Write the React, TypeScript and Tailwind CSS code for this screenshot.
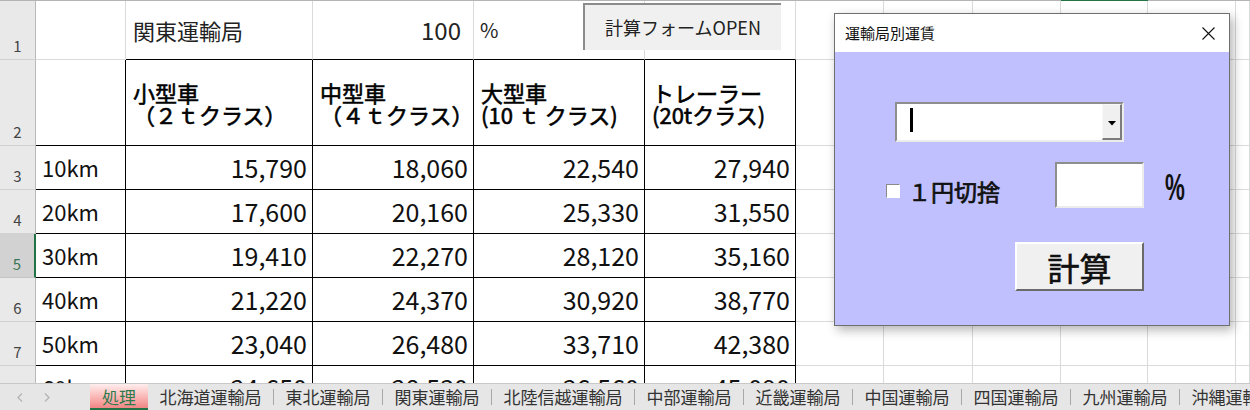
import React from 'react'

const FONT = "font-['Noto_Sans_CJK_JP','Noto_Sans',sans-serif]"
const COLS = 'grid grid-cols-[36px_90px_187px_161px_171px_151px_88px_89px_88px_87px_88px_1fr]'

const GRIDLINE = 'border-r border-b border-[#dadada]'
const BLACK = 'border-r border-b border-black'
const UNDER_BLACK = 'border-r border-b border-r-[#dadada] border-b-black'

const fares = [
  ['10km', '15,790', '18,060', '22,540', '27,940'],
  ['20km', '17,600', '20,160', '25,330', '31,550'],
  ['30km', '19,410', '22,270', '28,120', '35,160'],
  ['40km', '21,220', '24,370', '30,920', '38,770'],
  ['50km', '23,040', '26,480', '33,710', '42,380'],
  ['60km', '24,650', '28,530', '36,560', '45,090'],
]

const headers = [
  ['小型車', '（２ｔクラス）'],
  ['中型車', '（４ｔクラス）'],
  ['大型車', '(10 ｔ クラス)'],
  ['トレーラー', '(20tクラス)'],
]

const tabs = ['北海道運輸局', '東北運輸局', '関東運輸局', '北陸信越運輸局', '中部運輸局', '近畿運輸局', '中国運輸局', '四国運輸局', '九州運輸局', '沖縄運輸局']

function RowHead({ n, active }: { n: number; active?: boolean }) {
  return active ? (
    <div className="flex items-end justify-center pb-[2px] bg-[#d2d2d2] border-b border-b-[#c4c4c4] border-r-2 border-r-[#217346] text-[15px] text-[#3b7452]">
      {n}
    </div>
  ) : (
    <div className="flex items-end justify-center pb-[2px] bg-[#e9e9e9] border-r border-b border-r-[#b9b9b9] border-b-[#d2d2d2] text-[15px] text-[#444]">
      {n}
    </div>
  )
}

function Blanks() {
  return (
    <>
      {[0, 1, 2, 3, 4, 5].map((i) => (
        <div key={i} className={GRIDLINE} />
      ))}
    </>
  )
}

function Sheet() {
  return (
    <div className="relative h-[383px] overflow-hidden bg-white">
      {/* column header edge */}
      <div className={`${COLS} h-px bg-[#b4b4b4]`}>
        <div className="col-start-10 bg-[#217346]" />
      </div>

      {/* row 1 */}
      <div className={`${COLS} h-[59px]`}>
        <RowHead n={1} />
        <div className={GRIDLINE} />
        <div className={`${UNDER_BLACK} flex items-center pl-[7px] text-[22px] text-[#222]`}>関東運輸局</div>
        <div className={`${UNDER_BLACK} flex items-center justify-end pr-[12px] text-[24px] text-[#222]`}>100</div>
        <div className={`${UNDER_BLACK} flex items-center pl-[6px] text-[20px] text-[#222]`}>%</div>
        <div className={UNDER_BLACK} />
        <Blanks />
      </div>

      {/* row 2 */}
      <div className={`${COLS} h-[86px]`}>
        <RowHead n={2} />
        <div className={BLACK} />
        {headers.map(([a, b]) => (
          <div key={a} className={`${BLACK} flex flex-col justify-center pl-[7px] text-[22px] leading-[22px] text-black whitespace-nowrap [-webkit-text-stroke:0.6px_black]`}>
            <span>{a}</span>
            <span>{b}</span>
          </div>
        ))}
        <Blanks />
      </div>

      {/* rows 3.. */}
      {fares.map((r, i) => (
        <div key={r[0]} className={`${COLS} h-[44px]`}>
          <RowHead n={i + 3} active={i === 2} />
          <div className={`${BLACK} flex items-center pl-[6px] text-[22px] text-[#111]`}>{r[0]}</div>
          {r.slice(1).map((v, j) => (
            <div key={j} className={`${BLACK} flex items-center justify-end pr-[5px] text-[25px] text-[#111]`}>
              {v}
            </div>
          ))}
          <Blanks />
        </div>
      ))}

      {/* macro button placed on the sheet */}
      <div className="absolute left-[583px] top-[3px] w-[198px] h-[47px] bg-[#f0f0f0] border-t-2 border-l-2 border-[#8c8c8c] flex items-center justify-center text-[18px] text-[#222]">
        計算フォームOPEN
      </div>
    </div>
  )
}

function TabBar() {
  return (
    <div className="h-[27px] flex items-stretch bg-[#e6e6e6] border-t border-[#c8c8c8] text-[17px] text-[#333] whitespace-nowrap">
      <div className="w-[90px] shrink-0 flex items-center gap-[21px] pl-[17px]">
        <svg width="6" height="9" viewBox="0 0 6 9"><path d="M5 0.5 L1 4.5 L5 8.5" fill="none" stroke="#b4b4b4" strokeWidth="1.3" /></svg>
        <svg width="6" height="9" viewBox="0 0 6 9"><path d="M1 0.5 L5 4.5 L1 8.5" fill="none" stroke="#b4b4b4" strokeWidth="1.3" /></svg>
      </div>
      <div className="shrink-0 w-[58px] flex items-center justify-center bg-gradient-to-b from-[#fdeeee] to-[#f08686] text-[#2f7a4d] border-b-2 border-[#217346] leading-none">
        処理
      </div>
      {tabs.map((t, i) => (
        <div key={t} className="shrink-0 flex items-center">
          {i > 0 && <span className="w-px h-[16px] bg-[#a8a8a8]" />}
          <span className="px-[11.5px]">{t}</span>
        </div>
      ))}
    </div>
  )
}

function FareDialog() {
  return (
    <div className="absolute left-[834px] top-[13px] w-[396px] h-[313px] border border-[#6f6f6f] bg-[#c0c0ff] shadow-[3px_4px_10px_rgba(0,0,0,0.3)]">
      <div className="h-[38px] bg-white flex items-center justify-between pl-[10px] pr-[14px]">
        <span className="text-[15px] text-[#111]">運輸局別運賃</span>
        <svg width="13" height="13" viewBox="0 0 13 13">
          <path d="M0.5 0.5 L12.5 12.5 M12.5 0.5 L0.5 12.5" stroke="#111" strokeWidth="1.1" />
        </svg>
      </div>

      <div className="flex flex-col items-start">
        {/* combo */}
        <div className="ml-[60px] mt-[50px] w-[229px] h-[40px] flex bg-white border-2 border-t-[#8e8e8e] border-l-[#8e8e8e] border-b-[#ececec] border-r-[#ececec]">
          <div className="flex-1">
            <div className="ml-[13px] mt-[4px] w-[3px] h-[24px] bg-black" />
          </div>
          <div className="w-[20px] flex items-center justify-center bg-[#f0f0f0] border-l border-t border-l-[#f8f8f8] border-t-[#f8f8f8] border-r-2 border-b-2 border-r-[#7c7c7c] border-b-[#7c7c7c]">
            <svg width="8" height="5" viewBox="0 0 8 5" className="mt-[3px]"><path d="M0 0 H8 L4 4.5 Z" fill="#000" /></svg>
          </div>
        </div>

        {/* rounding / percent */}
        <div className="mt-[20px] flex items-start">
          <div className="w-[169px] ml-[51px] flex items-start">
            <span className="mt-[22px] w-[14px] h-[14px] bg-white border border-t-[#8a8a8a] border-l-[#8a8a8a] border-b-white border-r-white" />
            <span className="ml-[8px] mt-[18px] text-[23px] leading-[23px] text-[#111] [-webkit-text-stroke:0.7px_#111]">１円切捨</span>
          </div>
          <div className="w-[89px] h-[46px] bg-white border-2 border-t-[#8e8e8e] border-l-[#8e8e8e] border-b-[#ececec] border-r-[#ececec]" />
          <span className="ml-[21px] mt-[8px] font-['Liberation_Sans',sans-serif] text-[36px] leading-[36px] font-bold text-[#111] origin-left scale-x-[0.62]">%</span>
        </div>

        {/* run */}
        <div className="ml-[180px] mt-[34px] w-[129px] h-[49px] flex items-center justify-center bg-[#f0f0f0] border-2 border-t-white border-l-white border-b-[#6a6a6a] border-r-[#6a6a6a] text-[32px] text-[#111] [-webkit-text-stroke:0.6px_#111]">
          計算
        </div>
      </div>
    </div>
  )
}

export default function App() {
  return (
    <div className={`relative w-[1250px] h-[410px] overflow-hidden bg-white ${FONT}`}>
      <Sheet />
      <TabBar />
      <FareDialog />
    </div>
  )
}
